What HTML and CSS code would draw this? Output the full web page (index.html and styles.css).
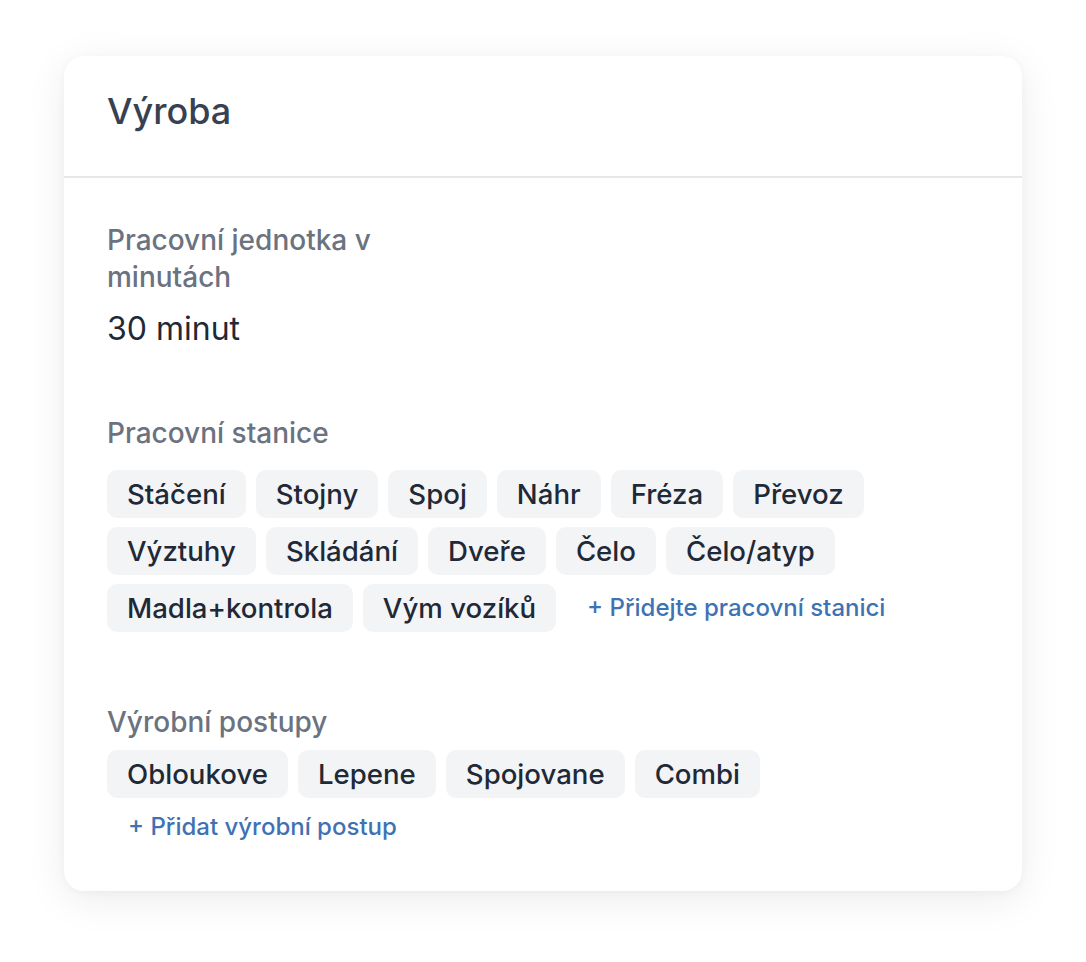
FILE: index.html
```html
<!DOCTYPE html>
<html lang="cs">
<head>
    <meta charset="UTF-8">
    <meta name="viewport" content="width=device-width, initial-scale=1.0">
    <title>Výroba</title>
    <link rel="stylesheet" href="styles.css">
</head>
<body>
    <div class="card">
        <div class="card-header">
            <h2>Výroba</h2>
        </div>

        <div class="card-body">
            <div class="field">
                <div class="field-label unit-label">Pracovní jednotka v minutách</div>
                <div class="field-value">30 minut</div>
            </div>

            <div class="field stations">
                <div class="field-label">Pracovní stanice</div>
                <div class="chips">
                    <span class="chip">Stáčení</span>
                    <span class="chip">Stojny</span>
                    <span class="chip">Spoj</span>
                    <span class="chip">Náhr</span>
                    <span class="chip">Fréza</span>
                    <span class="chip">Převoz</span>
                    <span class="chip">Výztuhy</span>
                    <span class="chip">Skládání</span>
                    <span class="chip">Dveře</span>
                    <span class="chip">Čelo</span>
                    <span class="chip">Čelo/atyp</span>
                    <span class="chip">Madla+kontrola</span>
                    <span class="chip">Vým vozíků</span>
                    <a class="add-link" href="#">+ Přidejte pracovní stanici</a>
                </div>
            </div>

            <div class="field processes">
                <div class="field-label">Výrobní postupy</div>
                <div class="chips">
                    <span class="chip">Obloukove</span>
                    <span class="chip">Lepene</span>
                    <span class="chip">Spojovane</span>
                    <span class="chip">Combi</span>
                </div>
                <a class="add-link" href="#">+ Přidat výrobní postup</a>
            </div>
        </div>
    </div>
</body>
</html>
```

FILE: styles.css
```css
body {
    font-family: 'Inter', 'Noto Sans', sans-serif;
    background-color: #fff;
    margin: 0;
    padding: 56px 64px;
}

.card {
    width: 958px;
    background-color: #fff;
    border-radius: 20px;
    box-shadow: 0 8px 40px rgba(0, 0, 0, 0.08), 0 2px 8px rgba(0, 0, 0, 0.03);
}

.card-header {
    height: 122px;
    box-sizing: border-box;
    display: flex;
    align-items: center;
    padding: 0 43px 10px;
    border-bottom: 2px solid #e5e7eb;
}

.card-header h2 {
    margin: 0;
    font-size: 36px;
    font-weight: 500;
    color: #374151;
}

.card-body {
    padding: 44px 43px 46px;
}

.field-label {
    font-size: 28px;
    line-height: 37px;
    font-weight: 500;
    color: #6b7280;
}

.unit-label {
    max-width: 300px;
}

.field-value {
    margin-top: 13px;
    font-size: 32px;
    line-height: 40px;
    color: #1f2937;
}

.stations {
    margin-top: 66px;
}

.stations .chips {
    margin-top: 18px;
}

.processes {
    margin-top: 72px;
}

.processes .chips {
    margin-top: 9px;
}

.chips {
    display: flex;
    flex-wrap: wrap;
    align-items: center;
    gap: 9px 10px;
}

.chip {
    height: 48px;
    display: inline-flex;
    align-items: center;
    padding: 0 20px;
    border-radius: 10px;
    background-color: #f3f4f6;
    font-size: 27.6px;
    font-weight: 500;
    color: #1f2937;
}

.add-link {
    display: inline-block;
    padding: 0 21px;
    font-size: 24px;
    line-height: 36px;
    font-weight: 500;
    color: #3f72b3;
    text-decoration: none;
}

.processes .add-link {
    margin-top: 11px;
}
```
